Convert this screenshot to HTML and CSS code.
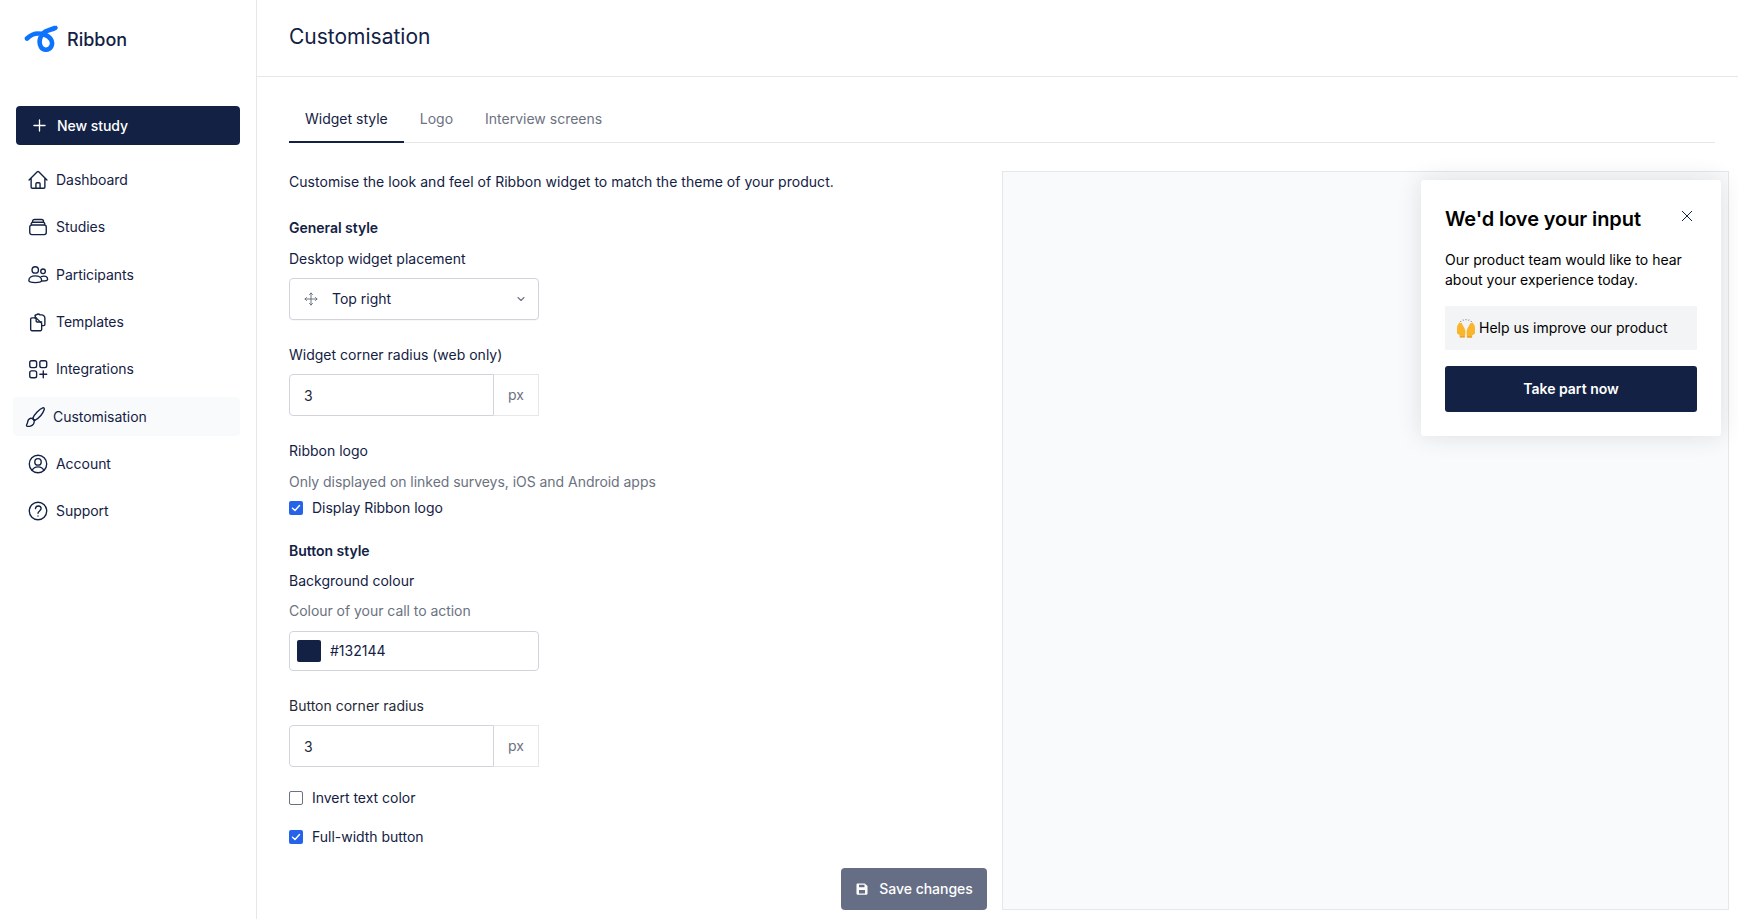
FILE: index.html
```html
<!DOCTYPE html>
<html lang="en">
<head>
<meta charset="utf-8">
<title>Customisation</title>
<link rel="stylesheet" href="styles.css">
</head>
<body>
<div class="app">
  <aside class="sidebar">
    <div class="brand">
      <svg class="brand-mark" viewBox="0 0 36 30" fill="none"><path d="M3 15.500C7.500 11 14 9.500 20 11.500c6 2 9.500 6.500 7.500 11.500-2 4.500-8 5-10.500 1-3-5-1-14 7-16.500L31 5" stroke="#0d72fd" stroke-width="4.600" stroke-linecap="round" stroke-linejoin="round"/><path d="M26 6.500 32.500 2.500l1.500 2.500-5 3.500z" fill="#0d72fd"/></svg>
      <span class="brand-name">Ribbon</span>
    </div>
    <button class="new-study"><svg class="plus" viewBox="0 0 14 14" fill="none"><path d="M7 1v12M1 7h12" stroke="#fff" stroke-width="1.400" stroke-linecap="round"/></svg>New study</button>
    <nav class="nav">
      <a class="nav-item"><svg class="ico" viewBox="0 0 24 24"><path d="M2.250 12l8.954-8.955c.44-.439 1.152-.439 1.591 0L21.750 12M4.500 9.750v10.125c0 .621.504 1.125 1.125 1.125H9.750v-4.875c0-.621.504-1.125 1.125-1.125h2.250c.621 0 1.125.504 1.125 1.125V21h4.125c.621 0 1.125-.504 1.125-1.125V9.750M8.250 21h8.250"/></svg>Dashboard</a>
      <a class="nav-item"><svg class="ico" viewBox="0 0 24 24"><path d="M6 6.880V6a2.250 2.250 0 012.250-2.250h7.500A2.250 2.250 0 0118 6v.880M4.500 9.880V9a2.250 2.250 0 012.250-2.250h10.500A2.250 2.250 0 0119.500 9v.880M5.250 9.750h13.500A2.250 2.250 0 0121 12v6a2.250 2.250 0 01-2.250 2.250H5.250A2.250 2.250 0 013 18v-6a2.250 2.250 0 012.250-2.250z"/></svg>Studies</a>
      <a class="nav-item"><svg class="ico" viewBox="0 0 24 24"><circle cx="9" cy="6.500" r="3.500"/><circle cx="17.500" cy="8" r="2.500"/><path d="M2 18c0-3 3-5 7-5s7 2 7 5c0 1.300-3 2.300-7 2.300S2 19.300 2 18z"/><path d="M15.500 13.800c3.700-1.300 7-.2 7 2.700 0 1.300-2 2-5.500 2"/></svg>Participants</a>
      <a class="nav-item"><svg class="ico" viewBox="0 0 24 24"><path d="M9 7.500H5.250A1.250 1.250 0 004 8.750v11.500a1.250 1.250 0 001.250 1.250h9.500A1.250 1.250 0 0016 20.250V16"/><path d="M9 5V4.250h1.500a2 2 0 013.500 0H15.500A3.500 3.500 0 0119.500 7.750v7a1.250 1.250 0 01-1.250 1.250H16V13.500L10 7.500H9"/><path d="M9 5v2.500M10 7.500v3.500a1 1 0 001 1h5"/></svg>Templates</a>
      <a class="nav-item"><svg class="ico" viewBox="0 0 24 24"><rect x="3" y="3" width="7.500" height="7.500" rx="2"/><rect x="14" y="3" width="7.500" height="7.500" rx="2"/><rect x="3" y="14" width="7.500" height="7.500" rx="2"/><path d="M17.750 14v7.500M14 17.750h7.500"/></svg>Integrations</a>
      <a class="nav-item is-active"><svg class="ico" viewBox="0 0 24 24"><path d="M9.500 13.500C11.500 9 16.500 3.500 21 1.800c1 .3 1.300.8 1.200 1.700-1.500 4.500-6 9.800-10.500 12.200z"/><path d="M9.500 13.500l2.200 2.200"/><path d="M9.300 13.700c-2-.7-4 .2-4.800 2-.7 1.500-.4 2.700-1.300 4-.5.800-.8 1.500-.2 2.200 2.500 1 5.800-.2 7.200-2.200 1.300-2 1.600-4.500-.9-6z"/></svg>Customisation</a>
      <a class="nav-item"><svg class="ico" viewBox="0 0 24 24"><circle cx="12" cy="12" r="9.500"/><circle cx="12" cy="9.700" r="3.500"/><path d="M5.500 19c1.300-2.500 3.700-3.800 6.500-3.800s5.200 1.300 6.500 3.800"/></svg>Account</a>
      <a class="nav-item"><svg class="ico" viewBox="0 0 24 24"><circle cx="12" cy="12" r="9.500"/><path d="M9.200 9.300c.4-2 2-2.800 3.300-2.700 1.700.1 2.900 1.300 2.900 2.800 0 2.400-3.400 2.700-3.400 5"/><path d="M12 17.400v.1"/></svg>Support</a>
    </nav>
  </aside>
  <main class="main">
    <header class="topbar"><h1 class="page-title">Customisation</h1></header>
    <div class="content">
      <div class="tabs">
        <a class="tab is-current">Widget style</a>
        <a class="tab">Logo</a>
        <a class="tab">Interview screens</a>
      </div>
      <div class="columns">
        <form class="form">
          <p class="row intro">Customise the look and feel of Ribbon widget to match the theme of your product.</p>
          <h2 class="row section m-26">General style</h2>
          <div class="row m-11">Desktop widget placement</div>
          <div class="control select m-9">
            <svg class="move" viewBox="0 0 14 14" fill="none"><path d="M7 1v12M1 7h12M5.500 2.500 7 1l1.500 1.500M5.500 11.500 7 13l1.500-1.500M2.500 5.500 1 7l1.500 1.500M11.500 5.500 13 7l-1.500 1.500" stroke="#6b7280" stroke-width="1" stroke-linecap="round" stroke-linejoin="round"/></svg>
            <span class="select-value">Top right</span>
            <svg class="chev" viewBox="0 0 10 10" fill="none"><path d="M2 3.500 5 6.500l3-3" stroke="#6b7280" stroke-width="1.100" stroke-linecap="round" stroke-linejoin="round"/></svg>
          </div>
          <div class="row m-25">Widget corner radius (web only)</div>
          <div class="input-group m-9"><span class="control num">3</span><span class="addon">px</span></div>
          <div class="row m-25">Ribbon logo</div>
          <div class="row hint m-11">Only displayed on linked surveys, iOS and Android apps</div>
          <div class="row check-row m-6"><span class="check is-on"><svg viewBox="0 0 14 14" fill="none"><path d="M3.500 7.300 6 9.500l4.500-5" stroke="#fff" stroke-width="1.500" stroke-linecap="round" stroke-linejoin="round"/></svg></span>Display Ribbon logo</div>
          <h2 class="row section m-23">Button style</h2>
          <div class="row m-10">Background colour</div>
          <div class="row hint m-10">Colour of your call to action</div>
          <div class="control colour m-10"><span class="swatch"></span><span>#132144</span></div>
          <div class="row m-25 dark">Button corner radius</div>
          <div class="input-group m-9"><span class="control num">3</span><span class="addon">px</span></div>
          <div class="row check-row m-21"><span class="check"></span>Invert text color</div>
          <div class="row check-row m-19"><span class="check is-on"><svg viewBox="0 0 14 14" fill="none"><path d="M3.500 7.300 6 9.500l4.500-5" stroke="#fff" stroke-width="1.500" stroke-linecap="round" stroke-linejoin="round"/></svg></span>Full-width button</div>
          <div class="actions">
            <button class="save" type="button"><svg class="save-ico" viewBox="0 0 14 14"><path fill-rule="evenodd" d="M2.500 1.500h7.200L12.500 4v7.500a1.200 1.200 0 01-1.200 1.200H2.700a1.200 1.200 0 01-1.200-1.200v-9a1 1 0 011-1zM4 2.800v2.500h5.500V2.800zM4 8v3.500h6V8z" fill="#fff"/></svg><span class="save-label">Save changes</span></button>
          </div>
        </form>
        <section class="preview">
          <div class="widget">
            <div class="widget-head">
              <h3 class="widget-title">We'd love your input</h3>
              <svg class="close" viewBox="0 0 12 12" fill="none"><path d="M1 1l10 10M11 1 1 11" stroke="#132144" stroke-width="1"/></svg>
            </div>
            <p class="widget-text">Our product team would like to hear about your experience today.</p>
            <div class="widget-note">
              <svg class="hands" viewBox="0 0 20 20"><path d="M1 15.500V10c0-2 .8-3.500 2-5 .6-.8 1.600-.4 1.600.5.500-.8 1.500-.4 1.500.5l2.500 4.500c.8 1.500.9 3 .7 5.500L8.800 19H3.800l-.3-2z" fill="#f9b62c"/><path d="M19 15.500V10c0-2-.8-3.500-2-5-.6-.8-1.600-.4-1.600.5-.5-.8-1.500-.4-1.500.5l-2.500 4.500c-.8 1.500-.9 3-.7 5.500l.1 3.500h5l.3-2z" fill="#f9b62c"/><path d="M3.800 19h5M11.200 19h5" stroke="#e08f1a" stroke-width="1"/><path d="M4.500 3 5 4M7 1.500l.3 1.200M10 1v1.200M13 1.500l-.3 1.200M15.500 3 15 4" stroke="#7d828c" stroke-width="1"/></svg>
              <span>Help us improve our product</span>
            </div>
            <button class="widget-cta" type="button">Take part now</button>
          </div>
        </section>
      </div>
    </div>
  </main>
</div>
</body>
</html>
```
FILE: styles.css
```css
* { box-sizing: border-box; }
html, body { margin: 0; height: 100%; overflow: hidden; }
body { font-family: Inter, "Liberation Sans", sans-serif; font-size: 14px; line-height: 20px; color: #132144; background: #fff; }
h1, h2, h3, p { margin: 0; font: inherit; }
button { font: inherit; border: 0; cursor: pointer; }

.app { display: flex; height: 919px; }

.sidebar { width: 257px; flex: none; border-right: 1px solid #e5e7eb; padding: 0 16px; }
.brand { display: flex; align-items: center; height: 76px; padding: 0 0 0 8px; gap: 7px; }
.brand-mark { width: 36px; height: 30px; flex: none; }
.brand-name { font-size: 18px; font-weight: 500; margin-top: 3px; }

.new-study { margin-top: 30px; width: 224px; height: 39px; border-radius: 4px; background: #132144; color: #fff; font-weight: 500; letter-spacing: -.05px; display: flex; align-items: center; gap: 11px; padding: 0 0 0 17px; }
.plus { width: 13px; height: 13px; }

.nav { display: flex; flex-direction: column; gap: 8.330px; margin-top: 15.500px; }
.nav-item { height: 39px; display: flex; align-items: center; gap: 7px; padding-left: 11px; letter-spacing: -.04px; }
.nav-item.is-active { background: #f9fafb; border-radius: 4px; margin-left: -3px; }
.ico { width: 22px; height: 22px; flex: none; fill: none; stroke: #132144; stroke-width: 1.500; stroke-linecap: round; stroke-linejoin: round; }

.main { flex: 1; min-width: 0; display: flex; flex-direction: column; }
.topbar { height: 77px; border-bottom: 1px solid #e5e7eb; padding: 0 32px; display: flex; align-items: center; }
.page-title { font-size: 21px; font-weight: 400; line-height: 28px; margin-top: -2px; }

.content { flex: 1; padding: 0 9px 9px 32px; display: flex; flex-direction: column; }
.tabs { display: flex; margin: 23px 14px 0 0; border-bottom: 1px solid #e5e7eb; height: 43px; }
.tab { padding: 9px 16px 0; height: 43px; color: #6b7280; }
.tab.is-current { color: #132144; border-bottom: 2px solid #132144; }

.columns { flex: 1; display: grid; grid-template-columns: 698px 727px; column-gap: 15px; margin-top: 28px; }
.form { display: flex; flex-direction: column; align-items: flex-start; margin-top: 1px; }
.row { height: 20px; }
.intro { letter-spacing: .03px; }
.section { font-weight: 600; letter-spacing: -.03px; }
.hint { color: #6b7280; letter-spacing: -.04px; }
.dark { color: #1f2937; }
.m-6 { margin-top: 6px; }
.m-9 { margin-top: 9px; }
.m-10 { margin-top: 10px; }
.m-11 { margin-top: 11px; }
.m-19 { margin-top: 19px; }
.m-21 { margin-top: 21px; }
.m-23 { margin-top: 23px; }
.m-25 { margin-top: 25px; }
.m-26 { margin-top: 26px; }

.control { border: 1px solid #d1d5db; border-radius: 4px; background: #fff; display: flex; align-items: center; }
.select { width: 250px; height: 42px; padding: 0 14px; box-shadow: 0 1px 1px rgba(0,0,0,.03); }
.move { width: 14px; height: 14px; flex: none; }
.select-value { flex: 1; margin-left: 14px; }
.chev { width: 10px; height: 10px; flex: none; margin-right: -2px; }

.input-group { display: flex; width: 250px; height: 42px; }
.num { width: 205px; padding: 1px 0 0 14px; border-radius: 4px 0 0 4px; color: #1f2937; }
.addon { flex: 1; display: flex; align-items: center; justify-content: center; color: #6b7280; border: 1px solid #e5e7eb; border-left: 0; }

.check-row { display: flex; align-items: center; gap: 9px; letter-spacing: -.02px; }
.check { width: 14px; height: 14px; flex: none; border: 1px solid #6b7280; border-radius: 2px; background: #fff; display: block; }
.check.is-on { border: 0; background: #2563eb; }
.check svg { display: block; width: 14px; height: 14px; }

.colour { width: 250px; height: 40px; padding-left: 7px; gap: 9px; }
.swatch { width: 24px; height: 22px; background: #132144; border-radius: 2px; }

.actions { align-self: stretch; display: flex; justify-content: flex-end; margin-top: 21px; }
.save { width: 146px; height: 42px; background: #666e85; color: #fff; border-radius: 4px; font-weight: 500; display: flex; align-items: center; justify-content: center; gap: 10px; }
.save-ico { width: 14px; height: 14px; }
.save-label { letter-spacing: -.03px; }

.preview { position: relative; background: #f9fafb; border: 1px solid #e5e7eb; height: 739px; }
.widget { position: absolute; top: 8px; right: 7px; width: 300px; height: 256px; background: #fff; border-radius: 3px; padding: 24px; color: #000; box-shadow: 0 0 24px rgba(17,24,39,.12); }
.widget-head { display: flex; justify-content: space-between; align-items: flex-start; }
.widget-title { font-size: 20px; font-weight: 600; line-height: 28px; margin-top: 1px; letter-spacing: -.1px; }
.close { width: 12px; height: 12px; margin: 6px 4px 0 0; }
.widget-text { margin-top: 17px; line-height: 20px; }
.widget-note { margin-top: 16px; height: 44px; background: #f3f4f6; display: flex; align-items: center; padding-left: 11px; gap: 3px; }
.hands { width: 20px; height: 20px; flex: none; }
.widget-cta { margin-top: 16px; width: 100%; height: 46px; background: #132144; color: #fff; font-weight: 600; border-radius: 3px; }
```
